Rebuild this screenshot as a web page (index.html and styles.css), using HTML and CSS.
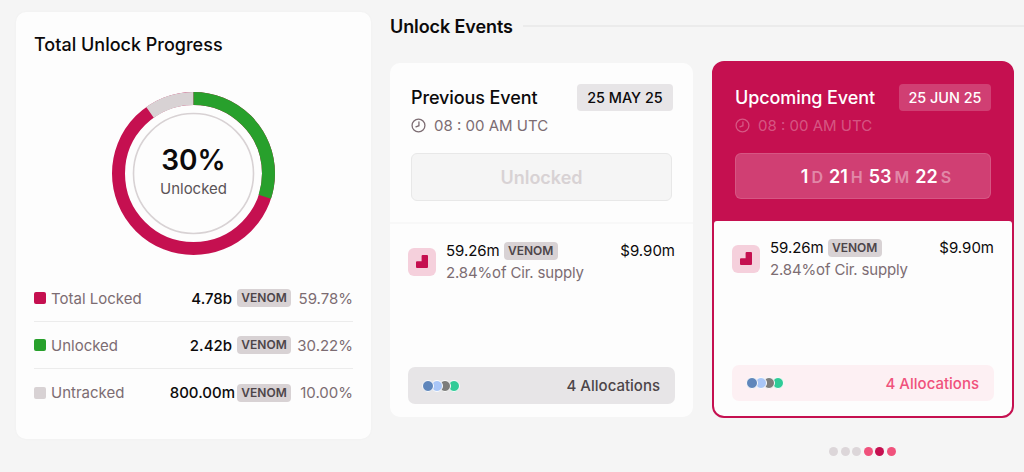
FILE: index.html
```html
<!DOCTYPE html>
<html lang="en">

<head>
    <meta charset="UTF-8">
    <meta name="viewport" content="width=device-width, initial-scale=1.0">
    <title>Unlock Events</title>
    <link rel="stylesheet" href="styles.css">
</head>

<body>

    <div class="page">
        <section class="progress-card">
            <h2 class="progress-title">Total Unlock Progress</h2>

            <div class="donut">
                <svg width="163" height="163" viewBox="0 0 163 163">
                    <g fill="none" transform="rotate(-90 81.5 81.5)">
                        <circle cx="81.5" cy="81.5" r="60" stroke="#d8d2d4" stroke-width="1.6"></circle>
                        <circle cx="81.5" cy="81.5" r="75" stroke="#c51050" stroke-width="13"></circle>
                        <circle cx="81.5" cy="81.5" r="75" stroke="#d8d2d4" stroke-width="13"
                            stroke-dasharray="47.12 424.12" stroke-dashoffset="-424.12"></circle>
                        <circle cx="81.5" cy="81.5" r="75" stroke="#28a02c" stroke-width="13"
                            stroke-dasharray="141.37 329.87"></circle>
                    </g>
                </svg>
                <div class="donut-label">
                    <div class="donut-percent">30%</div>
                    <div class="donut-text">Unlocked</div>
                </div>
            </div>

            <div class="legend">
                <div class="legend-row">
                    <span class="swatch swatch-locked"></span>
                    <span class="legend-name">Total Locked</span>
                    <span class="legend-amount">4.78b</span>
                    <span class="token">VENOM</span>
                    <span class="legend-share">59.78%</span>
                </div>
                <div class="legend-row">
                    <span class="swatch swatch-unlocked"></span>
                    <span class="legend-name">Unlocked</span>
                    <span class="legend-amount">2.42b</span>
                    <span class="token">VENOM</span>
                    <span class="legend-share">30.22%</span>
                </div>
                <div class="legend-row">
                    <span class="swatch swatch-untracked"></span>
                    <span class="legend-name">Untracked</span>
                    <span class="legend-amount legend-amount-wide">800.00m</span>
                    <span class="token">VENOM</span>
                    <span class="legend-share">10.00%</span>
                </div>
            </div>
        </section>

        <section class="events">
            <div class="events-header">
                <h2 class="events-title">Unlock Events</h2>
                <div class="events-line"></div>
            </div>

            <div class="event-cards">
                <!-- previous event -->
                <div class="event-card event-previous">
                    <div class="event-top">
                        <div class="event-head">
                            <h3 class="event-title">Previous Event</h3>
                            <span class="event-date">25 MAY 25</span>
                        </div>
                        <div class="event-time">
                            <svg class="clock" width="15" height="15" viewBox="0 0 14 14" fill="none" stroke="currentColor" stroke-width="1.2" stroke-linecap="round">
                                <circle cx="7" cy="7" r="6"></circle>
                                <path d="M7.4 3.6V7.2L4.6 8.2"></path>
                            </svg>
                            08 : 00 AM UTC
                        </div>
                        <div class="event-status">Unlocked</div>
                    </div>
                    <div class="event-body">
                        <div class="unlock-row">
                            <span class="unlock-icon">
                                <svg width="28" height="28" viewBox="0 0 28 28">
                                    <path d="M14.6 7H19a1 1 0 0 1 1 1V19a1 1 0 0 1-1 1H9a1 1 0 0 1-1-1V14.2a1 1 0 0 1 1-1h4.6V8a1 1 0 0 1 1-1Z" fill="#c51050"></path>
                                </svg>
                            </span>
                            <div class="unlock-info">
                                <div class="unlock-amount"><span>59.26m</span><span class="token">VENOM</span></div>
                                <div class="unlock-supply">2.84%of Cir. supply</div>
                            </div>
                            <span class="unlock-value">$9.90m</span>
                        </div>
                        <div class="allocations">
                            <span class="alloc-dots">
                                <i class="dot-blue"></i><i class="dot-sky"></i><i class="dot-grey"></i><i class="dot-green"></i>
                            </span>
                            <span>4 Allocations</span>
                        </div>
                    </div>
                </div>

                <!-- upcoming event -->
                <div class="event-card event-upcoming">
                    <div class="event-top">
                        <div class="event-head">
                            <h3 class="event-title">Upcoming Event</h3>
                            <span class="event-date">25 JUN 25</span>
                        </div>
                        <div class="event-time">
                            <svg class="clock" width="15" height="15" viewBox="0 0 14 14" fill="none" stroke="currentColor" stroke-width="1.2" stroke-linecap="round">
                                <circle cx="7" cy="7" r="6"></circle>
                                <path d="M7.4 3.6V7.2L4.6 8.2"></path>
                            </svg>
                            08 : 00 AM UTC
                        </div>
                        <div class="countdown">
                            <span class="count-part">1<small>D</small></span>
                            <span class="count-part">21<small>H</small></span>
                            <span class="count-part">53<small>M</small></span>
                            <span class="count-part">22<small>S</small></span>
                        </div>
                    </div>
                    <div class="event-body">
                        <div class="unlock-row">
                            <span class="unlock-icon">
                                <svg width="28" height="28" viewBox="0 0 28 28">
                                    <path d="M14.6 7H19a1 1 0 0 1 1 1V19a1 1 0 0 1-1 1H9a1 1 0 0 1-1-1V14.2a1 1 0 0 1 1-1h4.6V8a1 1 0 0 1 1-1Z" fill="#c51050"></path>
                                </svg>
                            </span>
                            <div class="unlock-info">
                                <div class="unlock-amount"><span>59.26m</span><span class="token">VENOM</span></div>
                                <div class="unlock-supply">2.84%of Cir. supply</div>
                            </div>
                            <span class="unlock-value">$9.90m</span>
                        </div>
                        <div class="allocations">
                            <span class="alloc-dots">
                                <i class="dot-blue"></i><i class="dot-sky"></i><i class="dot-grey"></i><i class="dot-green"></i>
                            </span>
                            <span>4 Allocations</span>
                        </div>
                    </div>
                </div>
            </div>

            <div class="pager">
                <i></i><i></i><i></i><i class="pager-near"></i><i class="pager-current"></i><i class="pager-near"></i>
            </div>
        </section>
    </div>

</body>

</html>
```

FILE: styles.css
```css
html,
body {
    margin: 0;
    height: 100%;
    overflow: hidden;
    background-color: #f5f5f5;
    font-family: Inter, "Noto Sans", sans-serif;
    color: #0c0a0b;
}

h2,
h3 {
    margin: 0;
}

.page {
    display: flex;
    align-items: flex-start;
    gap: 19px;
    padding: 12px 0 0 16px;
}

/* left card */
.progress-card {
    box-sizing: border-box;
    flex: none;
    width: 355px;
    height: 427px;
    padding: 22px 18px 0;
    background-color: #fdfdfd;
    border-radius: 10px;
    box-shadow: 0 0 3px rgba(0, 0, 0, 0.03);
}

.progress-title {
    font-size: 18px;
    line-height: 22px;
    font-weight: 500;
}

.donut {
    position: relative;
    width: 163px;
    height: 163px;
    margin: 36px auto 0;
}

.donut svg {
    display: block;
}

.donut-label {
    position: absolute;
    top: 51px;
    left: 0;
    right: 0;
    text-align: center;
}

.donut-percent {
    font-size: 28px;
    line-height: 34px;
    font-weight: 600;
}

.donut-text {
    margin-top: 2px;
    font-size: 15px;
    line-height: 20px;
    color: #5b5457;
}

.legend {
    margin-top: 20px;
}

.legend-row {
    display: flex;
    align-items: center;
    height: 47px;
    font-size: 15px;
    border-bottom: 1px solid #ececec;
    box-sizing: border-box;
}

.legend-row:last-child {
    border-bottom: none;
}

.swatch {
    width: 12px;
    height: 12px;
    margin-right: 5px;
    border-radius: 2px;
}

.swatch-locked {
    background-color: #c51050;
}

.swatch-unlocked {
    background-color: #28a02c;
}

.swatch-untracked {
    background-color: #d8d2d4;
}

.legend-name {
    flex: 1;
    color: #7c6c72;
}

.legend-amount {
    margin-right: 5px;
    font-weight: 500;
}

.legend-amount-wide {
    margin-right: 2px;
}

.legend-share {
    width: 62px;
    text-align: right;
    color: #7c6c72;
}

.token {
    display: inline-block;
    width: 54px;
    height: 18px;
    line-height: 18px;
    text-align: center;
    font-size: 12px;
    font-weight: 600;
    color: #4d4549;
    background-color: #d8d2d4;
    border-radius: 4px;
}

/* right side */
.events {
    flex: 1;
    min-width: 0;
}

.events-header {
    display: flex;
    align-items: center;
    gap: 10px;
    height: 28px;
}

.events-title {
    font-size: 18px;
    font-weight: 600;
    letter-spacing: -0.1px;
    white-space: nowrap;
}

.events-line {
    flex: 1;
    height: 2px;
    background-color: #ebebeb;
}

.event-cards {
    display: flex;
    align-items: flex-start;
    gap: 19px;
    padding-top: 23px;
}

.event-card {
    box-sizing: border-box;
    width: 303px;
    height: 354px;
    display: flex;
    flex-direction: column;
    border-radius: 12px;
}

.event-top {
    flex: none;
    box-sizing: border-box;
    padding: 21px 21px 0;
}

.event-head {
    display: flex;
    align-items: center;
    justify-content: space-between;
    height: 27px;
}

.event-title {
    font-size: 18px;
    font-weight: 500;
    letter-spacing: -0.1px;
}

.event-date {
    box-sizing: border-box;
    width: 96px;
    text-align: center;
    line-height: 27px;
    font-size: 14.4px;
    font-weight: 500;
    border-radius: 4px;
    background-color: #e7e5e7;
}

.event-time {
    display: flex;
    align-items: center;
    gap: 8px;
    height: 28px;
    font-size: 15px;
    color: #7c6c72;
}

.event-status {
    box-sizing: border-box;
    height: 48px;
    margin-top: 14px;
    line-height: 48px;
    text-align: center;
    font-size: 18px;
    font-weight: 600;
    color: #d8d2d4;
    background-color: #f5f5f5;
    border: 1px solid #e8e8e8;
    border-radius: 6px;
}

.event-body {
    flex: 1;
    display: flex;
    flex-direction: column;
    justify-content: space-between;
    box-sizing: border-box;
    background-color: #fdfdfd;
    border-radius: 0 0 10px 10px;
}

.unlock-row {
    display: flex;
    align-items: flex-start;
}

.unlock-icon {
    flex: none;
    width: 28px;
    height: 28px;
    margin: 6px 10px 0 0;
    background-color: #f5d0dc;
    border-radius: 6px;
}

.unlock-icon svg {
    display: block;
}

.unlock-info {
    flex: 1;
}

.unlock-amount {
    display: flex;
    align-items: center;
    gap: 4px;
    font-size: 15px;
    line-height: 18px;
    letter-spacing: -0.05px;
}

.unlock-supply {
    margin-top: 3px;
    font-size: 15px;
    line-height: 20px;
    letter-spacing: -0.15px;
    color: #7c6c72;
}

.unlock-value {
    font-size: 15px;
    line-height: 18px;
}

.allocations {
    display: flex;
    align-items: center;
    justify-content: space-between;
    height: 37px;
    padding: 0 15px 0 14px;
    font-size: 15px;
    font-weight: 500;
    color: #4d4549;
    background-color: #e7e5e7;
    border-radius: 7px;
}

/* earlier dots sit on top of later ones */
.alloc-dots {
    display: flex;
    isolation: isolate;
}

.alloc-dots i {
    position: relative;
    flex: none;
    box-sizing: content-box;
    width: 10px;
    height: 10px;
    margin-right: -3.5px;
    border: 1.5px solid #fdfdfd;
    border-radius: 50%;
}

.dot-blue {
    z-index: 4;
    background-color: #5f86bb;
}

.dot-sky {
    z-index: 3;
    background-color: #a9c6f7;
}

.dot-grey {
    z-index: 2;
    background-color: #7d7d7b;
}

.dot-green {
    z-index: 1;
    background-color: #2fcb97;
}

/* card variants */
.event-previous {
    background-color: #f8f8f8;
}

.event-previous .event-top {
    height: 159px;
    background-color: #fdfdfd;
    border-radius: 10px 10px 0 0;
}

.event-previous .event-date {
    margin-right: -1px;
}

.event-previous .event-body {
    margin-top: 2px;
    padding: 18px 18px 13px;
}

.event-upcoming {
    width: 302px;
    height: 357px;
    margin-top: -2px;
    background-color: #c51050;
    border: 2px solid #c51050;
}

.event-upcoming .event-top {
    height: 158px;
    color: #fff;
}

.event-upcoming .event-date {
    width: 92px;
    background-color: rgba(255, 255, 255, 0.2);
}

.event-upcoming .event-time {
    color: rgba(255, 255, 255, 0.3);
}

.event-upcoming .event-body {
    padding: 18px 18px 15px;
    border-radius: 3px 3px 10px 10px;
}

.event-upcoming .allocations {
    height: 36px;
    color: #f0527c;
    background-color: #fdf0f3;
}

.countdown {
    box-sizing: border-box;
    display: flex;
    justify-content: center;
    align-items: center;
    gap: 6px;
    height: 46px;
    margin-top: 14px;
    padding-left: 26px;
    font-size: 18px;
    font-weight: 600;
    background-color: rgba(255, 255, 255, 0.2);
    border: 1px solid rgba(255, 255, 255, 0.12);
    border-radius: 6px;
}

.count-part small {
    margin-left: 3px;
    font-size: 16px;
    font-weight: 600;
    color: rgba(255, 255, 255, 0.4);
}

.pager {
    display: flex;
    justify-content: center;
    gap: 2.5px;
    width: 625px;
    margin-top: 29px;
    padding-left: 320px;
    box-sizing: border-box;
}

.pager i {
    width: 9px;
    height: 9px;
    border-radius: 50%;
    background-color: #dcd6d9;
}

.pager .pager-near {
    background-color: #f0527c;
}

.pager .pager-current {
    background-color: #c51050;
}
```
